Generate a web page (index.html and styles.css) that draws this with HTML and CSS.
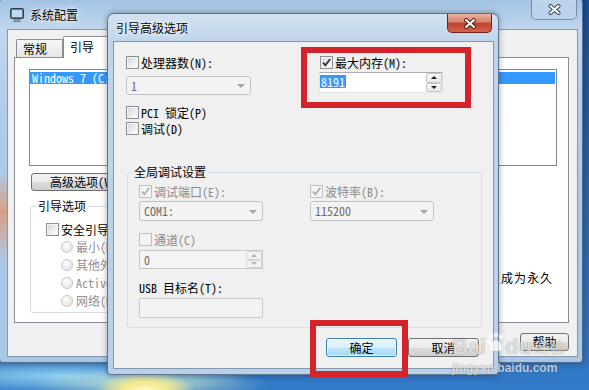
FILE: index.html
```html
<!DOCTYPE html>
<html lang="zh-CN">
<head>
  <meta charset="UTF-8" />
  <meta name="viewport" content="width=device-width, initial-scale=1" />
  <title>引导高级选项</title>
  <link rel="stylesheet" href="styles.css">
</head>
<body>
<div class="desktop">

  <!-- 系统配置: inactive window behind -->
  <div class="window back">
    <div class="titlebar">
      <svg class="app-icon" width="16" height="16" viewBox="0 0 16 16">
        <rect x="1.5" y="1.5" width="13" height="10" rx="1" fill="#68737f" stroke="#39424c"/>
        <rect x="3" y="3" width="10" height="7" fill="#bcd9f2"/>
        <path d="M6 12h4l1.5 2.5h-7z" fill="#9aa3ad" stroke="#5b636c" stroke-width=".6"/>
      </svg>
      <span class="title">系统配置</span>
      <span class="close close-inactive">
        <svg width="13" height="11" viewBox="0 0 13 11">
          <path d="M2.5 2l8 7M10.5 2l-8 7" stroke="#2f3d52" stroke-width="4" stroke-linecap="round"/>
          <path d="M2.5 2l8 7M10.5 2l-8 7" stroke="#fff" stroke-width="2.2" stroke-linecap="round"/>
        </svg>
      </span>
    </div>
    <div class="client back-client">
      <div class="tabs">
        <span class="tab">常规</span>
        <span class="tab active">引导</span>
        <span class="tab">服务</span>
        <span class="tab">启动</span>
        <span class="tab">工具</span>
      </div>
      <div class="tab-panel">
        <div class="os-list">
          <div class="os-item">Windows 7 (C:\Windows) : 当前操作系统; 默认操作系统</div>
        </div>
        <div class="list-actions">
          <button class="btn btn-advanced">高级选项(V)...</button>
          <button class="btn">设为默认值(S)</button>
          <button class="btn">删除(D)</button>
        </div>
        <div class="boot-row">
          <fieldset class="group boot-opts">
            <legend>引导选项</legend>
            <label class="check safe"><span class="box"></span>安全引导(F)</label>
            <label class="radio"><span class="dot"></span>最小(M)</label>
            <label class="radio"><span class="dot"></span>其他外壳(L)</label>
            <label class="radio"><span class="dot"></span>Active Directory 修复(P)</label>
            <label class="radio"><span class="dot"></span>网络(N)</label>
          </fieldset>
          <label class="check permanent"><span class="box"></span>使所有引导设置成为永久</label>
        </div>
      </div>
      <div class="window-buttons">
        <button class="btn btn-small">确定</button>
        <button class="btn btn-small">取消</button>
        <button class="btn btn-small">应用(A)</button>
        <button class="btn btn-small btn-help">帮助</button>
      </div>
    </div>
  </div>

  <!-- 引导高级选项: active dialog -->
  <div class="window dialog">
    <div class="titlebar">
      <span class="title">引导高级选项</span>
      <span class="close close-active">
        <svg width="14" height="11" viewBox="0 0 14 11">
          <path d="M3 2l8 7M11 2l-8 7" stroke="#4a1a12" stroke-width="4" stroke-linecap="round"/>
          <path d="M3 2l8 7M11 2l-8 7" stroke="#fff" stroke-width="2.2" stroke-linecap="round"/>
        </svg>
      </span>
    </div>
    <div class="client dlg-client">
      <div class="cpu-mem">
        <div class="col">
          <label class="check"><span class="box"></span>处理器数(N):</label>
          <div class="combo combo-cpu"><span>1</span><i class="arrow"></i></div>
          <label class="check pci"><span class="box"></span>PCI 锁定(P)</label>
          <label class="check dbg"><span class="box"></span>调试(D)</label>
        </div>
        <div class="col col-mem">
          <label class="check"><span class="box">
            <svg width="11" height="11" viewBox="0 0 11 11"><path d="M2 5.6l2.4 2.7L9.2 2" fill="none" stroke="#2e3848" stroke-width="1.9"/></svg>
          </span>最大内存(M):</label>
          <div class="spin spin-mem">
            <span class="sel">8191</span>
            <span class="spin-btns"><i class="up"></i><i class="down"></i></span>
          </div>
        </div>
      </div>

      <fieldset class="group debug">
        <legend>全局调试设置</legend>
        <div class="debug-grid">
          <div class="field-col">
            <div class="field">
              <label class="check disabled"><span class="box">
                <svg width="11" height="11" viewBox="0 0 11 11"><path d="M2 5.6l2.4 2.7L9.2 2" fill="none" stroke="#b0b0b0" stroke-width="1.9"/></svg>
              </span>调试端口(E):</label>
              <div class="combo combo-wide"><span>COM1:</span><i class="arrow"></i></div>
            </div>
            <div class="field field-channel">
              <label class="check disabled"><span class="box"></span>通道(C)</label>
              <div class="spin spin-off">
                <span class="val">0</span>
                <span class="spin-btns"><i class="up"></i><i class="down"></i></span>
              </div>
            </div>
            <div class="field field-usb">
              <div class="label">USB 目标名(T):</div>
              <div class="textbox"></div>
            </div>
          </div>
          <div class="field-col">
            <div class="field">
              <label class="check disabled"><span class="box">
                <svg width="11" height="11" viewBox="0 0 11 11"><path d="M2 5.6l2.4 2.7L9.2 2" fill="none" stroke="#b0b0b0" stroke-width="1.9"/></svg>
              </span>波特率(B):</label>
              <div class="combo combo-wide"><span>115200</span><i class="arrow"></i></div>
            </div>
          </div>
        </div>
      </fieldset>

      <div class="dlg-buttons">
        <button class="btn btn-default">确定</button>
        <button class="btn btn-cancel">取消</button>
      </div>
    </div>
  </div>

  <!-- red annotation boxes -->
  <div class="mark mark-memory"></div>
  <div class="mark mark-ok"></div>

  <div class="watermark">
    <div class="wm-logo">
      <span>Bai</span>
      <svg width="18" height="20" viewBox="0 0 18 20">
        <circle cx="4" cy="5" r="2.4"/><circle cx="9" cy="2.8" r="2.4"/><circle cx="14" cy="5" r="2.4"/>
        <circle cx="2.5" cy="10.5" r="2.2"/><path d="M9 8c3 0 6 5 6 8s-3 3-6 3-6 0-6-3 3-8 6-8z"/>
      </svg>
      <span>du</span>
      <span class="wm-cn">经验</span>
    </div>
    <div class="wm-url">jingyan.baidu.com</div>
  </div>

</div>
</body>
</html>
```

FILE: styles.css
```css
* {
  box-sizing: border-box;
}
body {
  margin: 0;
  font-family: "Noto Sans Mono CJK SC", "Noto Sans CJK SC", "Liberation Mono", monospace;
  font-size: 12px;
  line-height: 14px;
  color: #000;
}
button {
  font: inherit;
  color: inherit;
  padding: 0;
}

.desktop {
  position: relative;
  width: 589px;
  height: 390px;
  overflow: hidden;
  background:
    radial-gradient(ellipse 50px 20px at 145px 392px, #fffde0 0%, #f6ea8c 45%, rgba(246, 234, 140, 0) 100%),
    radial-gradient(ellipse 120px 16px at 150px 384px, rgba(220, 240, 200, .8) 0%, rgba(220, 240, 200, 0) 100%),
    radial-gradient(ellipse 190px 18px at 60px 376px, rgba(150, 215, 245, .9) 0%, rgba(150, 215, 245, 0) 100%),
    linear-gradient(#1b4d93, #2a66ae 55%, #3279c7);
}

/* window frames */
.window {
  position: absolute;
  display: flex;
  flex-direction: column;
  border: 1px solid rgba(28, 48, 78, .6);
  border-radius: 7px 7px 4px 4px;
  box-shadow: 0 0 6px rgba(0, 0, 0, .35);
}
.back {
  left: -1px;
  top: -4px;
  width: 584px;
  height: 367px;
  padding: 0 5px 6px 8px;
  background:
    linear-gradient(rgba(226, 150, 110, 0) 175px, rgba(226, 150, 110, .8) 215px, rgba(226, 150, 110, 0) 265px) 0 0 / 8px 100% no-repeat,
    linear-gradient(#9fc1e3, #c2d8ee 34px, #aecbe8 120px, #a8c7e6);
}
.dialog {
  left: 107px;
  top: 13px;
  width: 392px;
  height: 362px;
  padding: 0 5px 6px 6px;
  background: linear-gradient(#d3e2f1, #c0d5eb 28px, #b8d0e8);
}
.titlebar {
  display: flex;
  align-items: center;
  flex: none;
}
.back .titlebar {
  height: 33px;
  padding-top: 3px;
}
.dialog .titlebar {
  height: 28px;
}
.app-icon {
  margin: 0 5px 0 1px;
}
.title {
  text-shadow: 0 0 7px #fff, 0 0 3px #fff;
}
.dialog .title {
  margin-left: 2px;
}
.close {
  align-self: flex-start;
  margin-left: auto;
  display: flex;
  align-items: center;
  justify-content: center;
  border: 1px solid;
  border-top: 0;
  border-radius: 0 0 5px 5px;
}
.close-inactive {
  width: 46px;
  height: 20px;
  border-color: rgba(40, 70, 110, .5);
  background: linear-gradient(rgba(255, 255, 255, .3), rgba(255, 255, 255, .08));
}
.close-active {
  width: 45px;
  height: 19px;
  margin-right: 1px;
  border-color: #6a261c;
  background: linear-gradient(#ebb3a5, #d97d69 45%, #c0412c 52%, #d2634b);
}
.client {
  flex: 1;
  background: #f0f0f0;
  box-shadow: 0 0 0 1px #8598ae;
}

/* shared controls */
.btn {
  display: block;
  height: 18px;
  border: 1px solid #707070;
  border-radius: 3px;
  background: linear-gradient(#f2f2f2, #ebebeb 50%, #dddddd 51%, #cfcfcf);
  line-height: 16px;
  text-align: center;
  white-space: nowrap;
}
.check {
  display: flex;
  align-items: center;
  gap: 2px;
  height: 13px;
  white-space: nowrap;
}
.box {
  flex: none;
  display: flex;
  width: 13px;
  height: 13px;
  border: 1px solid #8e8f8f;
  background: linear-gradient(135deg, #d0d3d8, #f7f7f7 75%);
  box-shadow: inset 0 0 0 1px #f4f4f4;
}
.check.disabled {
  color: #8a8a8a;
}
.check.disabled .box {
  border-color: #c0c0c0;
  background: #f4f4f4;
  box-shadow: none;
}
.group {
  margin: 0;
  border: 1px solid #d5dfe5;
  border-radius: 3px;
  min-width: 0;
}
.group legend {
  padding: 0 2px;
  line-height: 12px;
}
.combo {
  display: flex;
  align-items: center;
  border: 1px solid #c2c2c2;
  border-radius: 3px;
  background: #f3f3f3;
  color: #6d6d6d;
  padding-left: 4px;
}
.combo .arrow {
  margin: 1px 5px 0 auto;
  border-left: 4px solid transparent;
  border-right: 4px solid transparent;
  border-top: 4px solid #a4a4a4;
}
.spin {
  display: flex;
  border: 1px solid;
}
.spin-btns {
  margin-left: auto;
  width: 16px;
  display: flex;
  flex-direction: column;
}
.spin-btns i {
  flex: 1;
  display: flex;
  align-items: center;
  justify-content: center;
  border: 1px solid #c6c6c6;
  border-radius: 2px;
  background: linear-gradient(#fbfbfb, #e8e8e8);
}
.spin-btns i::before {
  content: "";
  border-left: 3px solid transparent;
  border-right: 3px solid transparent;
}
.spin-btns .up::before {
  border-bottom: 3px solid #1e1e1e;
}
.spin-btns .down::before {
  border-top: 3px solid #1e1e1e;
}

/* back window contents */
.tabs {
  display: flex;
  align-items: flex-end;
  height: 27px;
  padding-left: 8px;
}
.tab {
  width: 47px;
  height: 18px;
  padding-left: 6px;
  border: 1px solid #898c95;
  border-bottom: 0;
  border-radius: 2px 2px 0 0;
  background: linear-gradient(#f7f7f7, #e6e6e6);
  line-height: 17px;
}
.tab.active {
  position: relative;
  width: 48px;
  height: 22px;
  margin-bottom: -1px;
  background: #fff;
  line-height: 20px;
}
.tab-panel {
  height: 266px;
  margin: 0 8px 0 6px;
  padding: 11px 11px 0 14px;
  border: 1px solid #898c95;
  background: #fff;
}
.os-list {
  height: 97px;
  padding: 2px 1px 0 0;
  border: 1px solid #828790;
}
.os-item {
  height: 12px;
  padding-left: 2px;
  background: #3399ff;
  color: #fff;
  line-height: 12px;
  white-space: nowrap;
}
.list-actions {
  display: flex;
  gap: 6px;
  margin: 7px 0 0 2px;
}
.list-actions .btn {
  width: 110px;
}
.list-actions .btn-advanced {
  width: 122px;
}
.boot-row {
  display: flex;
  justify-content: space-between;
  align-items: flex-end;
  margin-top: 9px;
}
.boot-opts {
  width: 262px;
  margin-left: 1px;
  padding: 0 0 5px 5px;
}
.boot-opts .safe {
  margin: 11px 0 0 10px;
}
.radio {
  display: flex;
  align-items: center;
  gap: 3px;
  height: 12px;
  margin: 6px 0 0 25px;
  color: #8f8f8f;
  white-space: nowrap;
}
.safe + .radio {
  margin-top: 5px;
}
.dot {
  width: 12px;
  height: 12px;
  border: 1px solid #c6c6c6;
  border-radius: 50%;
  background: radial-gradient(circle at 40% 35%, #fdfdfd, #e0e0e0);
}
.permanent {
  margin: 0 4px 28px 0;
  letter-spacing: 1px;
  height: 14px;
}
.window-buttons {
  display: flex;
  justify-content: flex-end;
  gap: 6px;
  margin: 10px 8px 0 0;
}
.btn-small {
  width: 49px;
}
.btn-help {
  margin-left: 18px;
}

/* dialog contents */
.dlg-client {
  padding: 14px 0 0 12px;
}
.cpu-mem {
  display: grid;
  grid-template-columns: 193px 124px;
}
.combo-cpu {
  width: 125px;
  height: 19px;
  margin-top: 7px;
}
.pci {
  margin-top: 11px;
}
.dbg {
  margin-top: 3px;
}
.col-mem .check {
  margin-left: 1px;
}
.spin-mem {
  width: 124px;
  height: 21px;
  margin-top: 3px;
  border-color: #abadb3 #dbdfe6 #e3e9ef #e2e3ea;
  background: #fff;
}
.spin-mem .sel {
  align-self: flex-start;
  margin-top: 2px;
  padding: 0 1px;
  background: #3399ff;
  color: #fff;
  line-height: 13px;
}
.debug {
  width: 355px;
  margin: 31px 0 0 1px;
  padding: 0 0 9px 4px;
}
.debug-grid {
  display: flex;
  margin: 7px 0 0 7px;
}
.field-col {
  width: 180px;
}
.combo-wide {
  width: 124px;
  height: 20px;
  margin-top: 3px;
}
.field-channel {
  margin-top: 12px;
}
.spin-off {
  width: 124px;
  height: 19px;
  margin-top: 4px;
  border-color: #c6c6c6;
  background: #f4f4f4;
  color: #6d6d6d;
}
.spin-off .val {
  padding-left: 4px;
  line-height: 17px;
}
.spin-off .spin-btns i {
  border-color: #d6d6d6;
  background: #f2f2f2;
}
.spin-off .spin-btns .up::before {
  border-bottom-color: #b4b4b4;
}
.spin-off .spin-btns .down::before {
  border-top-color: #b4b4b4;
}
.field-usb {
  margin-top: 13px;
}
.field-usb .label {
  line-height: 12px;
}
.textbox {
  width: 124px;
  height: 20px;
  margin-top: 4px;
  border: 1px solid #c8c8c8;
  border-radius: 2px;
  background: #f2f2f2;
}
.dlg-buttons {
  display: flex;
  justify-content: flex-end;
  gap: 11px;
  margin: 10px 14px 0 0;
}
.dlg-buttons .btn {
  width: 71px;
  height: 19px;
  line-height: 17px;
}
.btn-default {
  border-color: #3c7fb1;
  background: linear-gradient(#eaf6fd, #d9f0fc 50%, #bee6fd 51%, #a7d9f5);
  box-shadow: inset 0 0 0 1px rgba(255, 255, 255, .6);
}

/* annotations */
.mark {
  position: absolute;
  border: 6px solid #d5232c;
}
.mark-memory {
  left: 301px;
  top: 47px;
  width: 170px;
  height: 61px;
}
.mark-ok {
  left: 310px;
  top: 320px;
  width: 98px;
  height: 57px;
}

.watermark {
  position: absolute;
  left: 452px;
  top: 324px;
  color: rgba(255, 255, 255, .72);
  fill: rgba(255, 255, 255, .72);
  font-family: "Liberation Sans", sans-serif;
  font-weight: bold;
  text-shadow: 0 0 1px rgba(0, 0, 0, .45);
}
.wm-logo {
  display: flex;
  align-items: flex-end;
  height: 34px;
  font-size: 22px;
  line-height: 22px;
}
.wm-logo svg {
  margin: 0 0 6px 1px;
}
.wm-logo .wm-cn {
  margin-left: 2px;
  font-family: "Noto Sans CJK SC", sans-serif;
  font-size: 15px;
  font-weight: normal;
}
.wm-url {
  margin-top: 4px;
  font-size: 12px;
  line-height: 13px;
}
```
